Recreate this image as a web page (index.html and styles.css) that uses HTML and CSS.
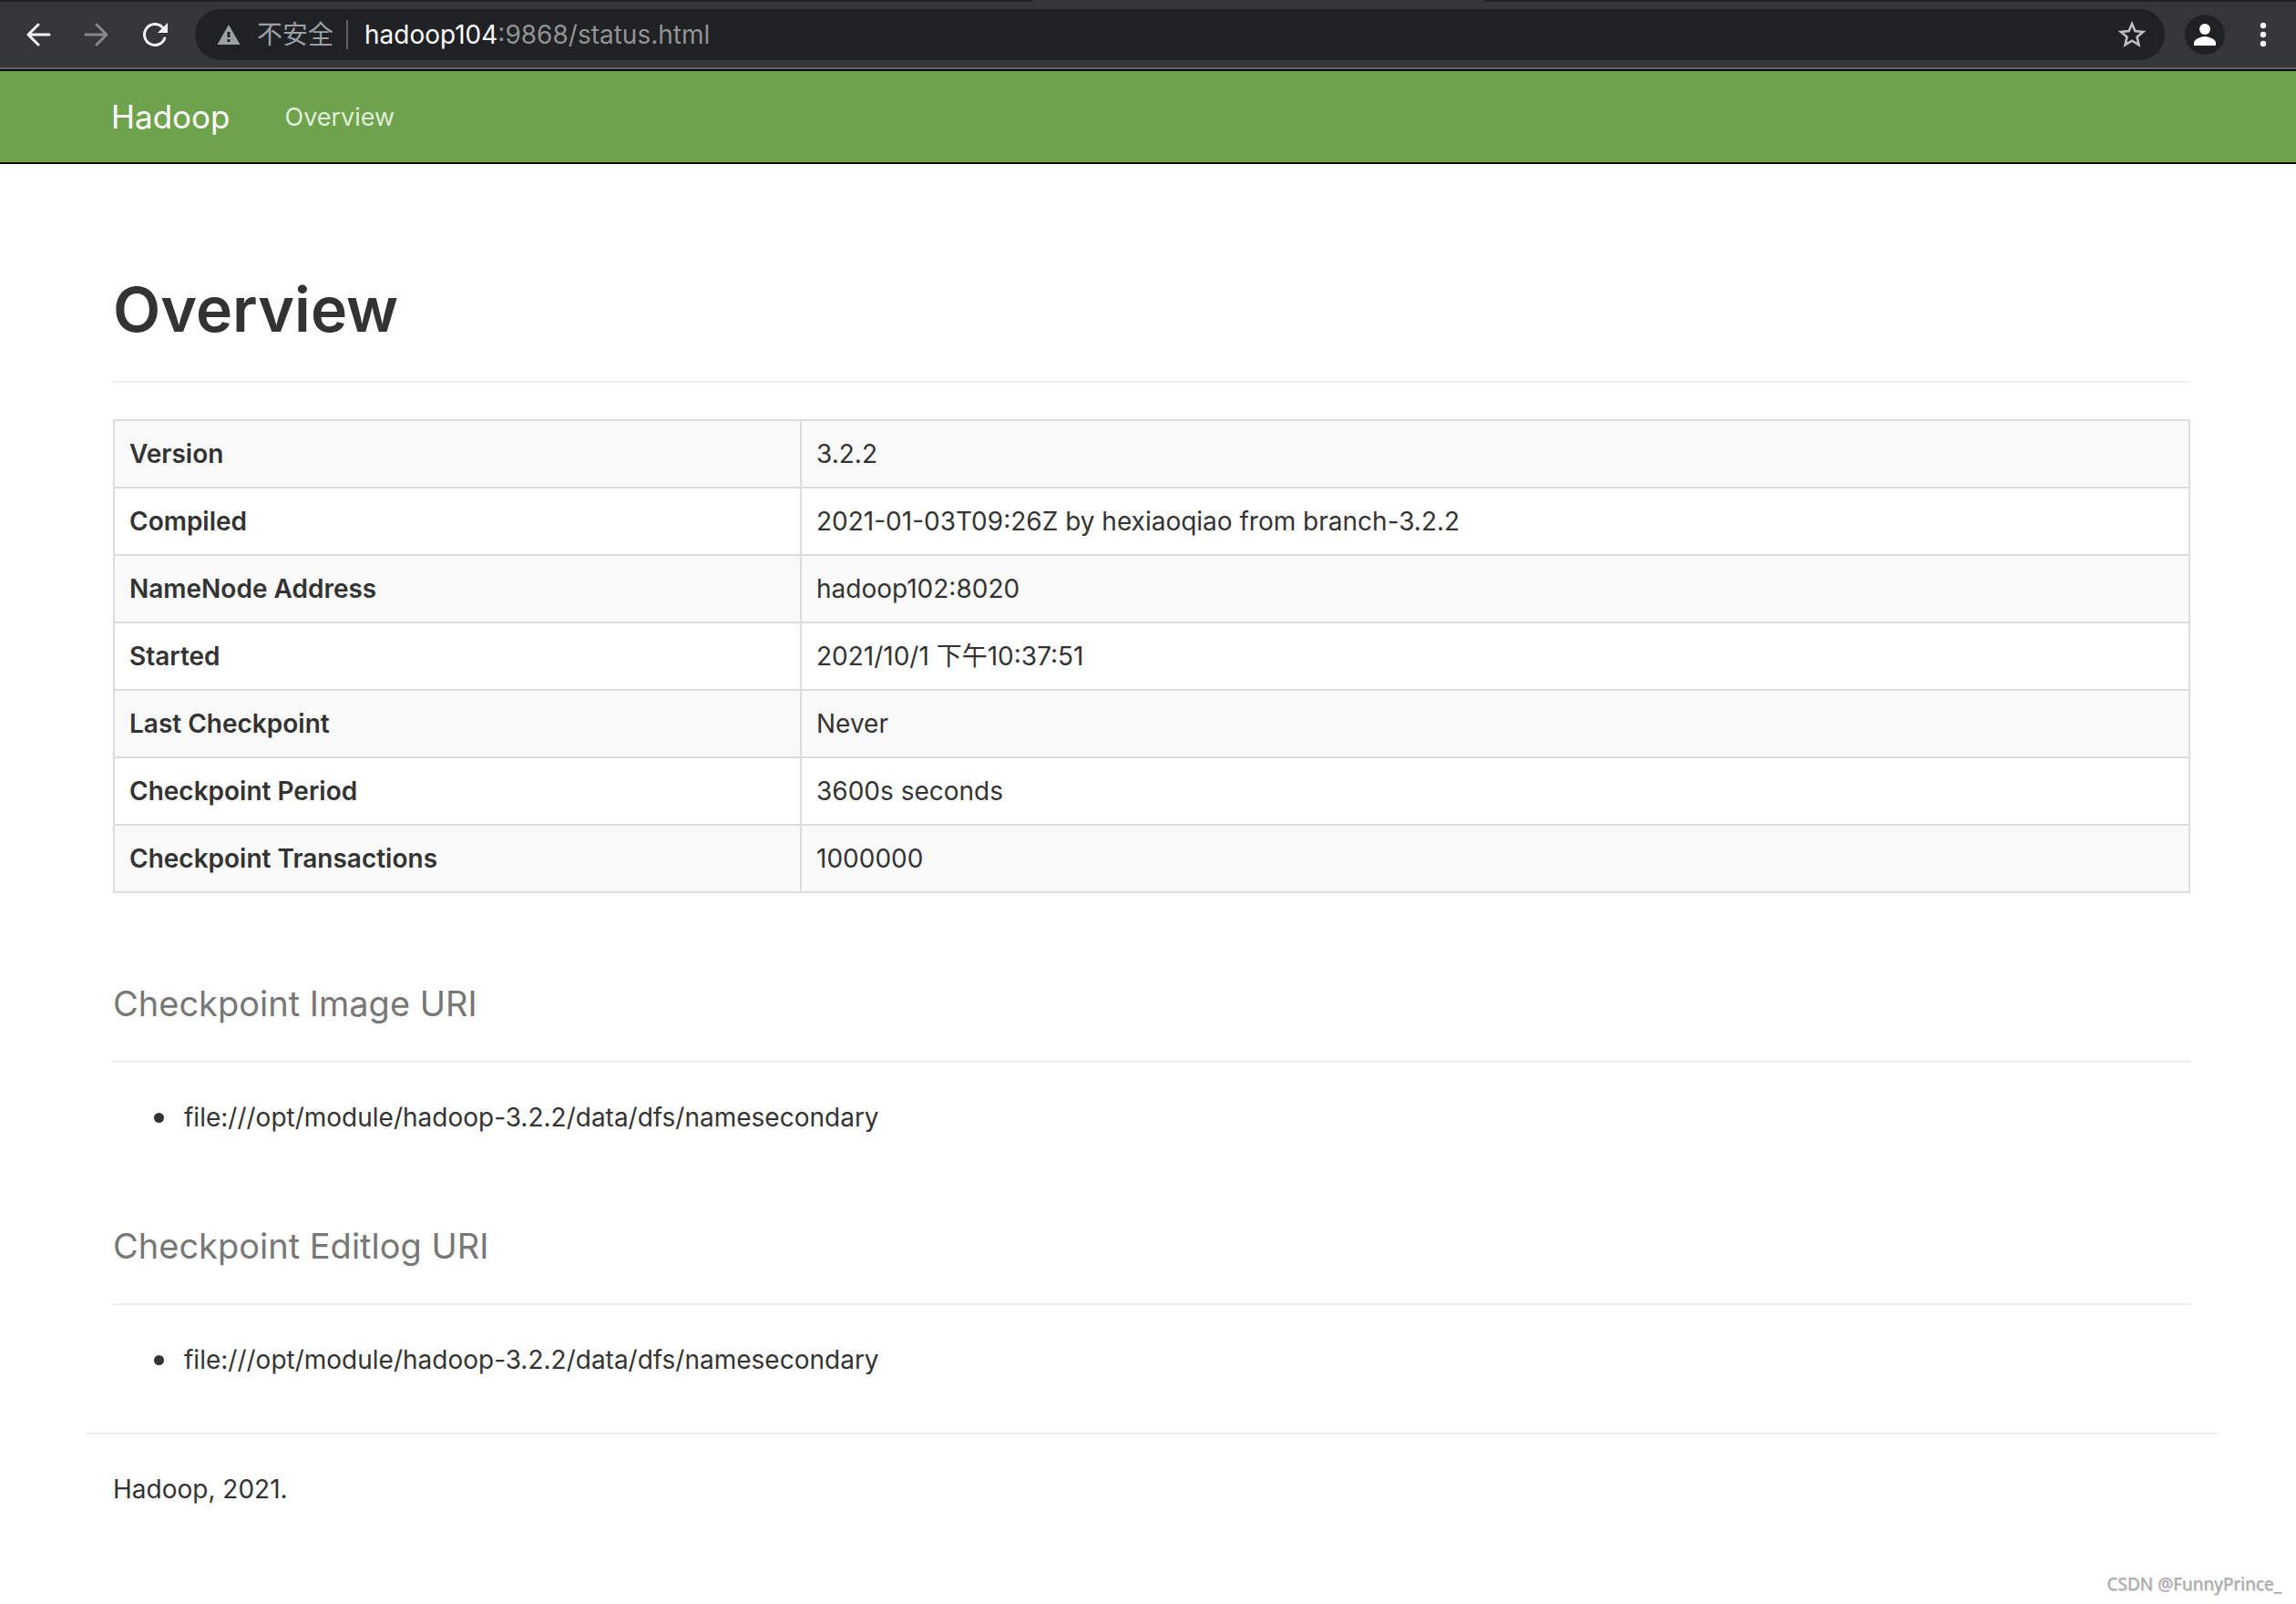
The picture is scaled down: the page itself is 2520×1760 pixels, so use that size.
FILE: index.html
```html
<!DOCTYPE html>
<html lang="zh-CN">
<head>
<meta charset="utf-8">
<meta name="viewport" content="width=device-width, initial-scale=1">
<title>SecondaryNamenode information</title>
<link rel="stylesheet" href="styles.css">
</head>
<body>
<div class="toolbar">
  <div class="active-tab"></div>
  <button class="tool" type="button" aria-label="Back">
    <svg width="32" height="32" viewBox="0 0 32 32"><path d="M28 16H5M16 5L5 16l11 11" fill="none" stroke="#f1f3f4" stroke-width="3" stroke-linecap="round" stroke-linejoin="round"/></svg>
  </button>
  <button class="tool" type="button" aria-label="Forward">
    <svg width="32" height="32" viewBox="0 0 32 32"><path d="M4 16H27M16 5l11 11-11 11" fill="none" stroke="#87888b" stroke-width="3" stroke-linecap="round" stroke-linejoin="round"/></svg>
  </button>
  <button class="tool" type="button" aria-label="Reload">
    <svg width="32" height="32" viewBox="0 0 32 32"><path d="M26.800 20A11.500 11.500 0 1 1 24.500 8.200" fill="none" stroke="#f1f3f4" stroke-width="3" stroke-linecap="round"/><path d="M30 3v11H19z" fill="#f1f3f4"/></svg>
  </button>
  <div class="omnibox">
    <svg class="warning" width="26" height="24" viewBox="0 0 26 24"><path d="M13 1L25.500 23H.5z" fill="#9aa0a6"/><path d="M11.500 9h3v6h-3zM11.500 17h3v3h-3z" fill="#202124"/></svg>
    <span class="insecure">不安全</span>
    <span class="divider"></span>
    <span class="url"><span class="host">hadoop104</span>:9868/status.html</span>
    <button class="star" type="button" aria-label="Bookmark this page">
      <svg width="32" height="32" viewBox="0 0 32 32"><path d="M16 4l3.400 8.100 8.800.8-6.700 5.700 2 8.600L16 22.700l-7.500 4.500 2-8.600-6.700-5.700 8.800-.8z" fill="none" stroke="#bdbdbd" stroke-width="2.600"/></svg>
    </button>
  </div>
  <button class="avatar" type="button" aria-label="Profile">
    <svg width="44" height="44" viewBox="0 0 44 44"><circle cx="22" cy="16" r="6" fill="#fff"/><path d="M10 34v-3c0-4 8-7 12-7s12 3 12 7v3z" fill="#fff"/></svg>
  </button>
  <button class="menu" type="button" aria-label="Menu">
    <svg width="32" height="32" viewBox="0 0 32 32" fill="#f1f3f4"><circle cx="16" cy="6" r="3.200"/><circle cx="16" cy="16" r="3.200"/><circle cx="16" cy="26" r="3.200"/></svg>
  </button>
</div>

<header class="navbar">
  <a class="brand" href="#">Hadoop</a>
  <nav><a class="nav-link" href="#overview">Overview</a></nav>
</header>

<main class="container">
  <h1 class="page-header" id="overview">Overview</h1>
  <table class="summary">
    <tbody>
      <tr><th scope="row">Version</th><td>3.2.2</td></tr>
      <tr><th scope="row">Compiled</th><td>2021-01-03T09:26Z by hexiaoqiao from branch-3.2.2</td></tr>
      <tr><th scope="row">NameNode Address</th><td>hadoop102:8020</td></tr>
      <tr><th scope="row">Started</th><td>2021/10/1 下午10:37:51</td></tr>
      <tr><th scope="row">Last Checkpoint</th><td>Never</td></tr>
      <tr><th scope="row">Checkpoint Period</th><td>3600s seconds</td></tr>
      <tr><th scope="row">Checkpoint Transactions</th><td>1000000</td></tr>
    </tbody>
  </table>
  <h2 class="section-header">Checkpoint Image URI</h2>
  <ul class="uris"><li>file:///opt/module/hadoop-3.2.2/data/dfs/namesecondary</li></ul>
  <h2 class="section-header">Checkpoint Editlog URI</h2>
  <ul class="uris"><li>file:///opt/module/hadoop-3.2.2/data/dfs/namesecondary</li></ul>
</main>

<footer class="footer">
  <p>Hadoop, 2021.</p>
</footer>
<div class="watermark">CSDN @FunnyPrince_</div>
</body>
</html>
```
FILE: styles.css
```css
* {
  box-sizing: border-box;
}

body {
  margin: 0;
  background: #fff;
  color: #333;
  font: 28px/40px Inter, "Noto Sans CJK SC", sans-serif;
}

button {
  display: block;
  margin: 0;
  padding: 0;
  border: 0;
  background: none;
}

a {
  text-decoration: none;
}

svg {
  display: block;
}

/* Browser toolbar */
.toolbar {
  position: relative;
  display: flex;
  align-items: center;
  height: 76px;
  padding: 0 20px 0 26px;
  border-top: 2px solid #202124;
  border-bottom: 2px solid #5f6164;
  background: #35363a;
}

.active-tab {
  position: absolute;
  top: -2px;
  left: 45%;
  width: 496px;
  height: 2px;
  background: #35363a;
}

.tool {
  margin-right: 32px;
}

.omnibox {
  display: flex;
  flex: 1;
  align-items: center;
  height: 56px;
  margin-left: -4px;
  padding: 0 20px 0 24px;
  border-radius: 28px;
  background: #202124;
}

.insecure {
  margin-left: 18px;
  color: #9aa0a6;
}

.divider {
  width: 2px;
  height: 32px;
  margin: 0 18px 0 14px;
  background: #5f6368;
}

.url {
  color: #919395;
}

.host {
  color: #fff;
}

.star {
  margin-left: auto;
}

.avatar {
  margin: 0 26px 0 22px;
  border-radius: 50%;
  background: #202124;
}

/* Page */
.navbar {
  display: flex;
  align-items: center;
  height: 104px;
  padding: 0 116px 0 122px;
  border: solid #080808;
  border-width: 2px 0;
  background: #6fa24c;
}

.brand {
  margin-right: 60px;
  color: #fff;
  font-size: 35px;
}

.nav-link {
  color: #e2eedb;
  font-size: 27px;
}

.container {
  padding: 120px 116px 0 124px;
}

.page-header {
  margin: 0 0 40px;
  padding-bottom: 40px;
  border-bottom: 2px solid #eee;
  font-size: 68px;
  font-weight: 600;
  line-height: 78px;
}

.summary {
  width: 100%;
  border-collapse: collapse;
  table-layout: fixed;
}

.summary th,
.summary td {
  padding: 16px;
  border: 2px solid #ddd;
  text-align: left;
}

.summary th {
  width: 33.1%;
  font-weight: 600;
}

.summary tr:nth-child(odd) {
  background: #f9f9f9;
}

.section-header {
  margin: 88px 0 40px;
  padding-bottom: 30px;
  border-bottom: 2px solid #eee;
  color: #777;
  font-size: 38px;
  font-weight: 400;
  line-height: 66px;
}

.uris {
  margin: 0;
  padding-left: 45px;
  list-style: none;
}

.uris li {
  display: flex;
  align-items: center;
  gap: 22px;
}

.uris li::before {
  width: 11px;
  height: 11px;
  border-radius: 50%;
  background: #333;
  content: "";
}

.footer {
  margin: 60px 86px 0 94px;
  padding: 40px 30px;
  border-top: 2px solid #eee;
}

.footer p {
  margin: 0;
}

.watermark {
  padding: 30px 16px 6px;
  color: #aaa;
  font: 19px/28px "Noto Sans", sans-serif;
  text-align: right;
  text-shadow: 1px 1px 0 #8886;
}
```
